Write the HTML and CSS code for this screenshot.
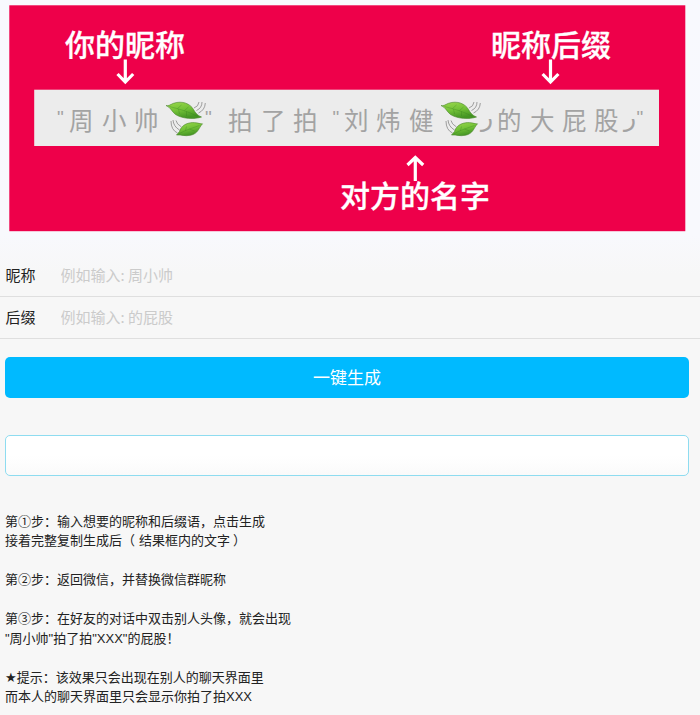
FILE: index.html
```html
<!DOCTYPE html>
<html lang="zh-CN">
<head>
<meta charset="utf-8">
<title>拍一拍昵称生成</title>
<link rel="stylesheet" href="styles.css">
</head>
<body>
<svg class="banner" viewBox="9 5 677 227" width="677" height="227">
  <defs>
    <linearGradient id="leafFill" x1="0" y1="0" x2="0.4" y2="1">
      <stop offset="0" stop-color="#9bd84c"/>
      <stop offset="0.55" stop-color="#72c137"/>
      <stop offset="1" stop-color="#459524"/>
    </linearGradient>
    <g id="leaves">
      <path class="leaf" d="M0.5 3.5C3 4.300 5 2.500 8 1.300C17-1.800 25 2 28 7.500C30 11 32 13.500 36 15C29 17.500 17 17 10 12.500C6 9.500 5.500 5.500 0.500 3.500Z"/>
      <path class="vein" d="M4 4.500C13 7 22 9 32 14.500M12 6.500L16 3M19 8.500L23 5M13 7L14 12M21 9.500L21 14"/>
      <path class="leaf" d="M37 21.800C34 22 31 20 25 20.800C18 21.800 15 26 14 29.500L11 33C16 32.500 19 34.500 25 33.300C33 31.500 33 26 37 21.800Z"/>
      <path class="vein" d="M13 32C20 28 27 26 34 23.500M20 28.500L21 24.500M24 27L29 29"/>
      <path class="motion" d="M28.500 6Q33 4.500 33.500 0M31 8.500Q36.500 6 36.500 0M33 11Q39.500 8 39.800 1M5.500 19Q5.500 28 12 31M7.500 18Q8 24.500 14 28M10.500 18.500Q11 22 16 25"/>
    </g>
  </defs>
  <rect class="banner-bg" x="9.300" y="5.300" width="676" height="225.900"/>
  <rect class="strip" x="34.200" y="89.700" width="624.800" height="56.300"/>
  <g class="callout">
    <text x="65" y="55.500">你的昵称</text>
    <text x="491" y="55.500">昵称后缀</text>
    <text x="340" y="206.500">对方的名字</text>
  </g>
  <g class="arrow">
    <path d="M125.300 59.500V81.500M117.500 74L125.300 82L133.200 74"/>
    <path d="M550.500 59.500V81.500M542.600 74L550.500 82L558.400 74"/>
    <path d="M415.300 181V158M407.500 165L415.300 157.500L423.200 165"/>
  </g>
  <g class="message">
    <text x="69 102 134" y="129.500">周小帅</text>
    <text x="228 261 293" y="129.500">拍了拍</text>
    <text x="344 376 409" y="129.500">刘炜健</text>
    <text x="497 530 562 594" y="129.500">的大屁股</text>
    <text class="quote" x="57" y="124">"</text>
    <text class="quote" x="205" y="124">"</text>
    <text class="quote" x="332.500" y="124">"</text>
    <text class="quote" x="636.500" y="124">"</text>
    <text class="tail" x="481" y="126">ر</text>
    <text class="tail" x="624" y="126">ر</text>
  </g>
  <use href="#leaves" x="165.500" y="102"/>
  <use href="#leaves" x="440.500" y="102"/>
</svg>
<main>
  <label class="field"><span class="label">昵称</span><input class="input" type="text" placeholder="例如输入: 周小帅"></label>
  <label class="field"><span class="label">后缀</span><input class="input" type="text" placeholder="例如输入: 的屁股"></label>
  <button class="generate" type="button">一键生成</button>
  <div class="result"></div>
  <div class="steps">
    <p>第①步：输入想要的昵称和后缀语，点击生成<br>接着完整复制生成后<span class="paren">（</span>结果框内的文字<span class="paren">）</span></p>
    <p>第②步：返回微信，并替换微信群昵称</p>
    <p>第③步：在好友的对话中双击别人头像，就会出现<br>"周小帅"拍了拍"XXX"的屁股！</p>
    <p><span class="star">★</span>提示：该效果只会出现在别人的聊天界面里<br>而本人的聊天界面里只会显示你拍了拍XXX</p>
  </div>
</main>
</body>
</html>
```
FILE: styles.css
```css
* { box-sizing: border-box; }
html { height: 715px; overflow: hidden; }
body {
  margin: 0;
  padding-top: 5px;
  background: linear-gradient(#f8f9fe 0, #f8f9fd 235px, #f7f7f7 275px) #f7f7f7;
  color: #222;
  font-family: "Noto Sans CJK SC", sans-serif;
}
.banner { display: block; margin-left: 9px; }
.banner-bg { fill: #ee004a; }
.strip { fill: #ececec; }
.callout { fill: #fff; stroke: #fff; stroke-width: 0.3; font-size: 30px; font-weight: 500; }
.arrow { fill: none; stroke: #fff; stroke-width: 3.2; }
.message { fill: #a3a3a3; font-size: 24.5px; }
.quote { font-family: "Liberation Sans", sans-serif; font-size: 19px; }
.tail { font-family: "DejaVu Sans", sans-serif; font-size: 25px; }
.leaf { fill: url(#leafFill); stroke: #4b872e; stroke-width: 0.6; }
.vein { fill: none; stroke: #347d1d; stroke-width: 0.6; opacity: 0.5; }
.motion { fill: none; stroke: #888; stroke-width: 0.8; }

.field {
  display: flex;
  align-items: center;
  height: 42px;
  padding: 0 5px 2px 5.5px;
  border-bottom: 1px solid #dfdfdf;
  font-size: 15px;
}
.field:first-child { height: 43px; margin-top: 22px; }
.label { width: 55px; }
.input {
  flex: 1;
  padding: 0;
  border: 0;
  outline: 0;
  background: transparent;
  font: inherit;
}
.input::placeholder { color: #cbcbcb; }
.generate {
  display: block;
  width: 684px;
  height: 41px;
  margin: 18px 5px 37px;
  padding: 0 0 2px;
  border: 0;
  border-radius: 5px;
  background: #00baff;
  color: #fff;
  font: 17px/39px "Noto Sans CJK SC", sans-serif;
}
.result {
  width: 684px;
  height: 41px;
  margin-left: 5px;
  border: 1px solid #8edcf0;
  border-radius: 5px;
  background: linear-gradient(#fff 50%, #fafafa);
}
.steps {
  margin: 36px 5px 0;
  font-family: "Liberation Sans", "Noto Sans CJK SC", sans-serif;
  font-size: 13px;
  line-height: 19.45px;
}
.steps p { margin: 0 0 19.45px; }
.paren { margin-right: 4px; }
.paren:last-child { margin: 0 0 0 3px; }
.star { font-family: "DejaVu Sans", sans-serif; line-height: 1; }
```
